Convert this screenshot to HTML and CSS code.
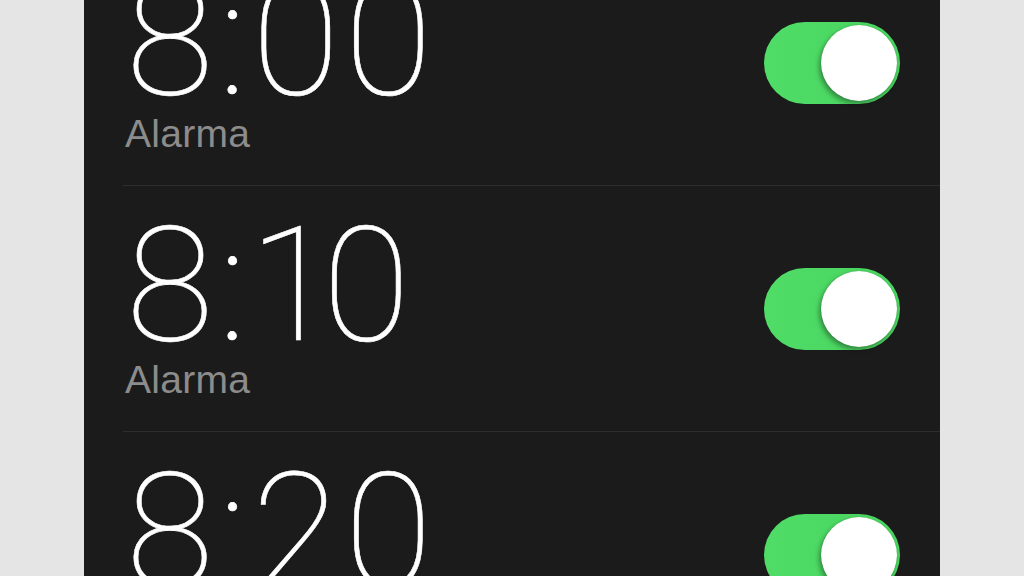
FILE: index.html
```html
<!DOCTYPE html>
<html lang="es">
<head>
<meta charset="utf-8">
<title>Alarmas</title>
<link rel="stylesheet" href="styles.css">
</head>
<body>
<main class="phone">
  <ul class="list">
    <li class="row">
      <div class="info">
        <div class="time">8:00</div>
        <div class="label">Alarma</div>
      </div>
      <div class="toggle on"><span class="knob"></span></div>
    </li>
    <li class="row">
      <div class="info">
        <div class="time">8:<span class="one">1</span>0</div>
        <div class="label">Alarma</div>
      </div>
      <div class="toggle on"><span class="knob"></span></div>
    </li>
    <li class="row">
      <div class="info">
        <div class="time">8:20</div>
        <div class="label">Alarma</div>
      </div>
      <div class="toggle on"><span class="knob"></span></div>
    </li>
  </ul>
</main>
</body>
</html>
```

FILE: styles.css
```css
html, body {
  margin: 0;
  padding: 0;
  height: 100%;
}
body {
  background: #e5e5e5;
  overflow: hidden;
}
.phone {
  margin-left: 84px;
  width: 856px;
  height: 576px;
  background: #1b1b1b;
  overflow: hidden;
}
.list {
  list-style: none;
  margin: -60px 0 0 39px;
  padding: 0;
}
.row {
  height: 245px;
  border-bottom: 1px solid #2e2e2e;
  display: flex;
  justify-content: space-between;
  align-items: center;
  padding-right: 40px;
}
.info {
  align-self: flex-start;
  display: flex;
  flex-direction: column;
  padding-top: 20px;
}
.time {
  font-family: Roboto, Inter, sans-serif;
  font-weight: 100;
  font-size: 160px;
  line-height: 160px;
  letter-spacing: 5px;
  color: #ffffff;
  -webkit-text-stroke: 0.6px #ffffff;
  margin-left: 3px;
  white-space: nowrap;
}
.one {
  letter-spacing: -14px;
  margin-left: -3px;
}
.label {
  font-family: "Liberation Sans", Arial, sans-serif;
  font-size: 39px;
  line-height: 39px;
  letter-spacing: 0.3px;
  color: #8c8c8c;
  margin-top: -6px;
  margin-left: 2px;
}
.toggle {
  position: relative;
  width: 136px;
  height: 82px;
  border-radius: 41px;
  background: linear-gradient(90deg, #4fdc67 0%, #49d55f 100%);
}
.knob {
  position: absolute;
  top: 3px;
  right: 3px;
  width: 76px;
  height: 76px;
  border-radius: 50%;
  background: #ffffff;
  box-shadow: -2px 3px 5px rgba(0, 0, 0, 0.35), 0 0 1px rgba(0, 0, 0, 0.3);
}
```
